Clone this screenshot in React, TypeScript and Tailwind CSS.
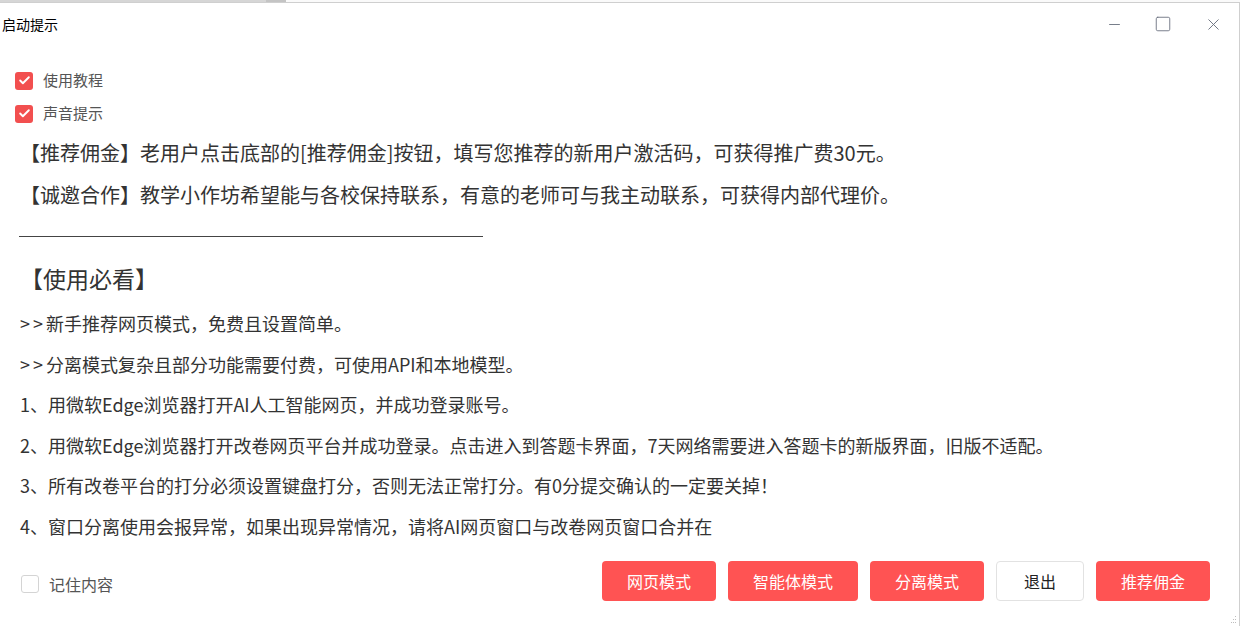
import { Check, Minus, Square, X } from "lucide-react";

const font = "font-['Noto_Sans_CJK_SC','Noto_Sans',sans-serif]";

const usageItems = [
  ">>新手推荐网页模式，免费且设置简单。",
  ">>分离模式复杂且部分功能需要付费，可使用API和本地模型。",
  "1、用微软Edge浏览器打开AI人工智能网页，并成功登录账号。",
  "2、用微软Edge浏览器打开改卷网页平台并成功登录。点击进入到答题卡界面，7天网络需要进入答题卡的新版界面，旧版不适配。",
  "3、所有改卷平台的打分必须设置键盘打分，否则无法正常打分。有0分提交确认的一定要关掉！",
  "4、窗口分离使用会报异常，如果出现异常情况，请将AI网页窗口与改卷网页窗口合并在",
];

const RedCheck = ({ label }: { label: string }) => (
  <div className="flex items-center h-[33px] pl-[15px]">
    <span className="flex items-center justify-center w-[18px] h-[18px] rounded-[3px] bg-[#f24f4f]">
      <Check className="w-[13px] h-[13px] text-white" strokeWidth={3.5} />
    </span>
    <span className="ml-[10px] text-[15px] text-[#555]">{label}</span>
  </div>
);

// ">>" is drawn a bit wider in the original font
const UsageLine = ({ text }: { text: string }) =>
  text.startsWith(">>") ? (
    <>
      <span className="tracking-[3px]">&gt;&gt;</span>
      {text.slice(2)}
    </>
  ) : (
    <>{text}</>
  );

const App = () => {
  return (
    <div className={`w-[1240px] h-[626px] bg-white flex flex-col overflow-hidden ${font}`}>
      {/* background window strip */}
      <div className="flex h-[3px] border-b border-[#cfcfcf]">
        <div className="w-[266px] bg-[#d6d6d6]" />
        <div className="w-[20px] bg-[#c4c4c4]" />
        <div className="flex-1 bg-[#fafafa]" />
      </div>

      <div className="flex-1 flex flex-col border-r border-[#cfcfcf]">
        {/* Title bar */}
        <div className="flex items-center h-[42px]">
          <div className="pl-[2px] text-[14px] text-black">启动提示</div>
          <div className="ml-auto flex items-center text-[#6b7280] pr-[1px]">
            <div className="w-[48px] flex justify-center">
              <Minus className="w-[17px] h-[17px]" strokeWidth={1.3} />
            </div>
            <div className="w-[50px] flex justify-center">
              <Square className="w-[18px] h-[18px]" strokeWidth={1.2} />
            </div>
            <div className="w-[50px] flex justify-center">
              <X className="w-[19px] h-[19px]" strokeWidth={1.2} />
            </div>
          </div>
        </div>

        {/* Options */}
        <div className="mt-[19px]">
          <RedCheck label="使用教程" />
          <RedCheck label="声音提示" />
        </div>

        {/* Notices */}
        <div className="pl-[20px] mt-[2px] text-[#333]">
          <p className="text-[20px] leading-[42px] whitespace-nowrap">
            【推荐佣金】老用户点击底部的[推荐佣金]按钮，填写您推荐的新用户激活码，可获得推广费30元。
          </p>
          <p className="text-[20px] leading-[42px] whitespace-nowrap">
            【诚邀合作】教学小作坊希望能与各校保持联系，有意的老师可与我主动联系，可获得内部代理价。
          </p>
          <div className="mt-[20px] ml-[-1px] w-[464px] border-t border-[#444]" />
          <h2 className="mt-[20px] text-[23px] leading-[42px]">【使用必看】</h2>
          <ul className="mt-[4px]">
            {usageItems.map((t) => (
              <li key={t} className="text-[18px] leading-[40.6px] whitespace-nowrap">
                <UsageLine text={t} />
              </li>
            ))}
          </ul>
        </div>

        {/* Footer */}
        <div className="mt-[14px] flex items-center h-[40px]">
          <div className="flex items-center pl-[21px] pt-[6px]">
            <span className="w-[18px] h-[18px] rounded-[3px] border border-[#d4d4d4] bg-white" />
            <span className="ml-[10px] text-[16px] text-[#555]">记住内容</span>
          </div>
          <div className="ml-auto flex items-center gap-[12px] pr-[29px] text-[16px]">
            <button className="w-[114px] h-[40px] rounded-[4px] bg-[#ff5353] text-white">网页模式</button>
            <button className="w-[130px] h-[40px] rounded-[4px] bg-[#ff5353] text-white">智能体模式</button>
            <button className="w-[114px] h-[40px] rounded-[4px] bg-[#ff5353] text-white">分离模式</button>
            <button className="w-[88px] h-[40px] rounded-[4px] border border-[#e2e2e2] bg-white text-[#222]">退出</button>
            <button className="w-[114px] h-[40px] rounded-[4px] bg-[#ff5353] text-white">推荐佣金</button>
          </div>
        </div>

        {/* resize grip */}
        <div className="flex-1 flex justify-end items-end pr-[2px] pb-[2px]">
          <svg width="8" height="8" viewBox="0 0 8 8" className="text-[#bdbdbd]">
            <rect x="6" y="0" width="1" height="1" fill="currentColor" />
            <rect x="4" y="3" width="1" height="1" fill="currentColor" />
            <rect x="6" y="3" width="1" height="1" fill="currentColor" />
            <rect x="2" y="6" width="1" height="1" fill="currentColor" />
            <rect x="4" y="6" width="1" height="1" fill="currentColor" />
            <rect x="6" y="6" width="1" height="1" fill="currentColor" />
          </svg>
        </div>
      </div>
    </div>
  );
};

export default App;
